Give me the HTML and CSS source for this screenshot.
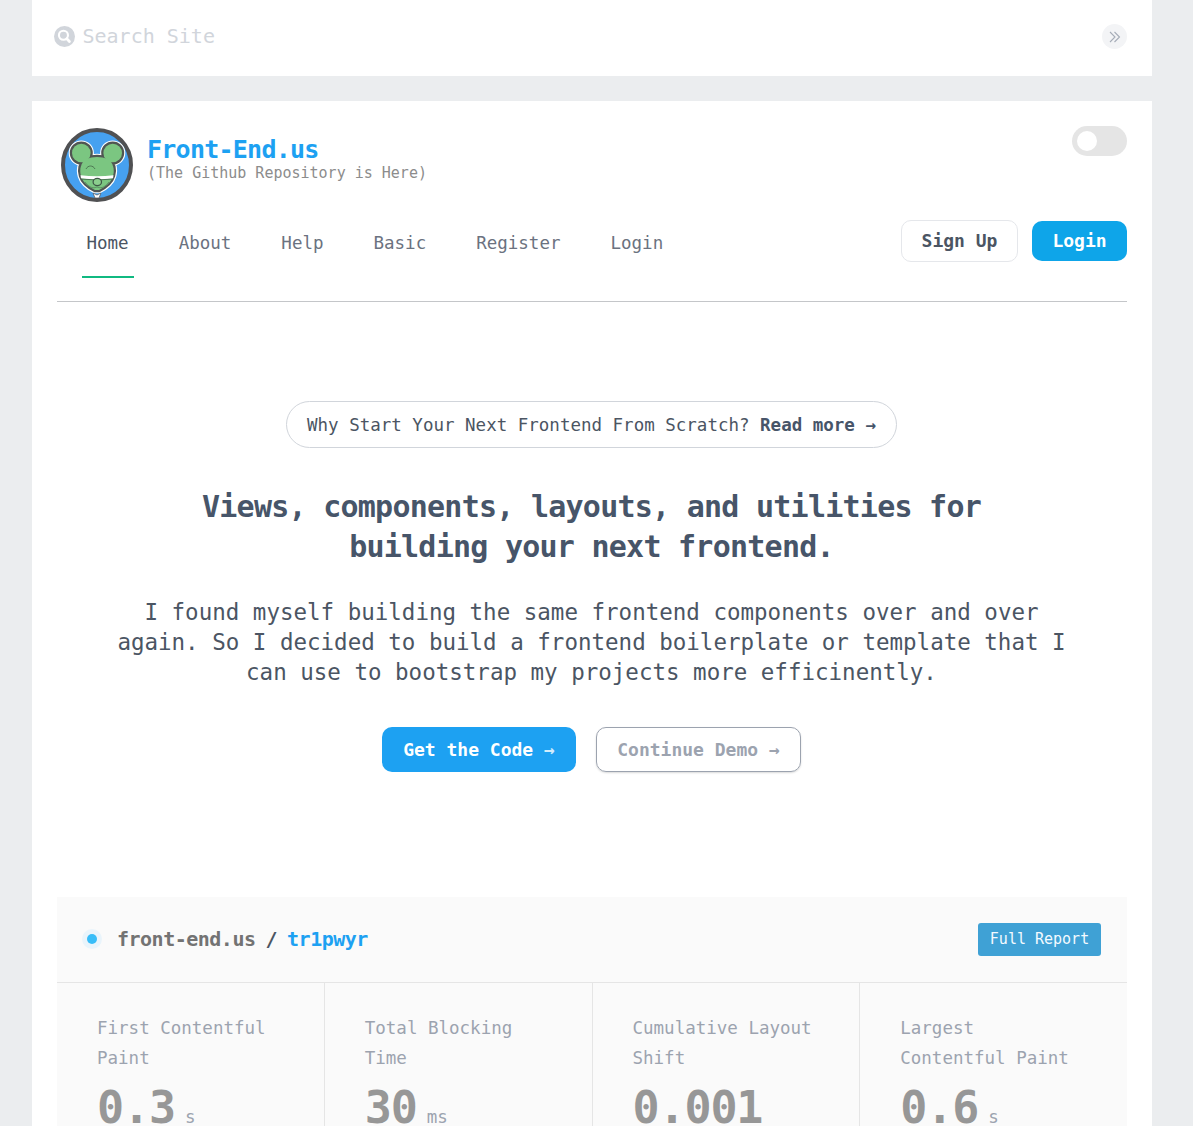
FILE: index.html
```html
<!DOCTYPE html>
<html lang="en">
<head>
<meta charset="utf-8">
<title>Front-End.us</title>
<link rel="stylesheet" href="styles.css">
</head>
<body>
<div class="page">
  <div class="search">
    <svg class="search-icon" viewBox="0 0 20 20"><circle cx="10" cy="10" r="10" fill="#d1d5db"/><circle cx="9" cy="8.8" r="4.3" fill="#d1d5db" stroke="#fff" stroke-width="2"/><path d="M12.2 12.2l2.5 2.6" stroke="#fff" stroke-width="2.6" stroke-linecap="round"/></svg>
    <span class="search-text">Search Site</span>
    <button class="expand" aria-label="Expand"><svg viewBox="0 0 12 12" fill="none" stroke="#a6adb8" stroke-width="1.1"><path d="M1 1l5 5-5 5M5.5 1l5 5-5 5"/></svg></button>
  </div>
  <main class="main">
    <header class="header">
      <div class="brand-row">
        <svg class="logo" viewBox="0 0 72 74">
          <defs>
            <g id="head"><circle cx="20.300" cy="25" r="9.300"/><circle cx="51.700" cy="25" r="9.300"/><path d="M25 31q11-4 22 0c5 4 7 10 5 17-2 7-8 11-14 14h-4c-6-3-12-7-14-14-2-7 0-13 5-17z"/></g>
          </defs>
          <ellipse cx="36" cy="37" rx="34" ry="35" fill="#46a1f0" stroke="#505153" stroke-width="4"/>
          <use href="#head" fill="#fff" stroke="#fff" stroke-width="6.600"/>
          <use href="#head" fill="#505653" stroke="#505653" stroke-width="4.400"/>
          <use href="#head" fill="#7bc681"/>
          <path d="M25 41c2-4 7-4 9 0" fill="none" stroke="#49714e" stroke-width=".9"/>
          <path d="M19.500 47.300q16.500 2 33 0l-.5 3.200q-16 2-32 0z" fill="#fff"/>
          <path d="M20 51q16 2 32 0" fill="none" stroke="#416d4a" stroke-width=".9"/>
          <path d="M24 54q6 8 12 5 6 3 12-5" fill="none" stroke="#57875d" stroke-width=".8"/>
          <ellipse cx="36.300" cy="54" rx="4.200" ry="3.600" fill="#8bce8d" stroke="#3e5747" stroke-width="1.200"/>
          <path d="M32 65l4 2 4-2-2 5h-4z" fill="#fff" stroke="#505153" stroke-width=".7"/>
        </svg>
        <div class="brand">
          <div class="brand-name">Front-End.us</div>
          <div class="brand-sub">(The Github Repository is Here)</div>
        </div>
        <span class="toggle"><span class="knob"></span></span>
      </div>
      <div class="nav-row">
        <nav class="nav">
          <a class="nav-link active">Home</a><a class="nav-link">About</a><a class="nav-link">Help</a><a class="nav-link">Basic</a><a class="nav-link">Register</a><a class="nav-link">Login</a>
        </nav>
        <a class="btn signup">Sign Up</a>
        <a class="btn login">Login</a>
      </div>
    </header>
    <section class="hero">
      <div class="pill">Why Start Your Next Frontend From Scratch? <b>Read more →</b></div>
      <h1 class="title">Views, components, layouts, and utilities for<br>building your next frontend.</h1>
      <p class="lead">I found myself building the same frontend components over and over<br>again. So I decided to build a frontend boilerplate or template that I<br>can use to bootstrap my projects more efficinently.</p>
      <div class="actions">
        <a class="btn code">Get the Code <span class="arrow">→</span></a>
        <a class="btn demo">Continue Demo →</a>
      </div>
    </section>
    <section class="report">
      <div class="report-head">
        <span class="dot"></span>
        <div class="crumbs"><span class="site">front-end.us</span><span class="slash">/</span><span class="user">tr1pwyr</span></div>
        <a class="full">Full Report</a>
      </div>
      <div class="stats">
        <div class="stat"><p class="label">First Contentful Paint</p><p class="value"><span class="num">0.3</span><span class="unit">s</span></p></div>
        <div class="stat"><p class="label">Total Blocking Time</p><p class="value"><span class="num">30</span><span class="unit">ms</span></p></div>
        <div class="stat"><p class="label">Cumulative Layout Shift</p><p class="value"><span class="num">0.001</span></p></div>
        <div class="stat"><p class="label">Largest Contentful Paint</p><p class="value"><span class="num">0.6</span><span class="unit">s</span></p></div>
      </div>
    </section>
  </main>
</div>
</body>
</html>
```
FILE: styles.css
```css
* { box-sizing: border-box; }
html { background: #fff; }
body, h1, p { margin: 0; }
body { font: 17.5px/25px "DejaVu Sans Mono", monospace; color: #4b5563; }
.page { height: 1126px; overflow: hidden; background: #ebedef; padding: 0 41px 0 32px; }
.search { height: 76px; margin-bottom: 25px; background: #fff; display: flex; align-items: flex-start; padding: 24px 25px 0 22px; }
.search-icon { width: 21px; height: 21px; margin-top: 2px; }
.search-text { margin-left: 7.5px; font-size: 20px; color: #d1d5db; flex: 1; }
.expand { width: 25px; height: 25px; padding: 0; border: 0; border-radius: 50%; background: #f3f4f6; display: grid; place-items: center; }
.expand svg { width: 12px; height: 12px; }
.main { background: #fff; height: 1025px; padding: 25px 25px 0; }
.header { height: 176px; border-bottom: 1px solid #c4c6c9; }
.brand-row { display: flex; align-items: flex-start; height: 94px; padding-left: 4px; }
.logo { width: 72px; height: 74px; margin-top: 2px; }
.brand { flex: 1; padding: 11px 0 0 14px; }
.brand-name { font-size: 25px; font-weight: 700; letter-spacing: -.75px; color: #1da1f2; line-height: 25px; }
.brand-sub { font-size: 15px; line-height: 22px; color: #8c8c8c; }
.toggle { width: 55px; height: 30px; border-radius: 15px; background: #e5e5e5; padding: 5px; }
.knob { display: block; width: 20px; height: 20px; border-radius: 50%; background: #fff; }
.nav-row { display: flex; align-items: flex-start; }
.nav { flex: 1; display: flex; gap: 40px; padding: 11px 0 0 25px; }
.nav-link { height: 47px; padding: 0 5px; color: #6b7280; border-bottom: 2px solid transparent; }
.nav-link.active { color: #4b5563; border-color: #10b981; padding: 0 5px 0 4.5px; }
.btn { font-size: 18px; font-weight: 700; display: flex; align-items: center; justify-content: center; border-radius: 10px; }
.signup { width: 117px; height: 42px; border: 1px solid #e5e7eb; padding-bottom: 2px; }
.login { width: 95px; height: 40px; margin: 1px 0 0 14px; padding-bottom: 2px; background: #0ea5e9; color: #fff; }
.hero { height: 595px; padding: 99px 1px 0 0; text-align: center; display: flex; flex-direction: column; align-items: center; }
.pill { height: 47px; width: 611px; border: 1px solid #d1d5db; border-radius: 24px; line-height: 47px; white-space: nowrap; }
.pill b, .title { color: #475569; }
.title { margin-top: 39px; font-size: 30px; line-height: 40px; letter-spacing: -.75px; }
.lead { margin-top: 30px; font-size: 22.5px; line-height: 30px; white-space: nowrap; }
.actions { display: flex; gap: 20px; margin-top: 40px; white-space: pre; }
.code { width: 194px; height: 45px; background: #1da1f2; color: #fff; }
.arrow { opacity: .8; }
.demo { width: 205px; height: 45px; border: 1px solid #9ca3af; color: #9ca3af; box-shadow: 0 1px 2px rgba(0, 0, 0, .15); }
.report { background: #fafafa; height: 229px; }
.report-head { height: 86px; border-bottom: 1px solid #e5e5e5; display: flex; align-items: center; padding: 0 26px 0 30px; }
.dot { width: 10px; height: 10px; margin-bottom: 1px; border-radius: 50%; background: #38bdf8; box-shadow: 0 0 0 5px #e9f4fb; }
.crumbs { flex: 1; display: flex; gap: 10px; margin-left: 20px; font-size: 20px; font-weight: 700; letter-spacing: -.5px; }
.site { color: #737373; }
.slash { color: #4b5563; }
.user { color: #1da1f2; }
.full { width: 123px; height: 33px; border-radius: 3px; background: #3fa1d5; color: #f3faff; font-size: 15px; line-height: 32px; text-align: center; }
.stats { display: grid; grid-template-columns: repeat(4, 1fr); gap: 1px; background: #e5e5e5; }
.stat { height: 143px; background: #fafafa; padding: 30px 40px 0; }
.label { color: #9ca3af; line-height: 30px; }
.value { display: flex; align-items: baseline; gap: 10px; margin-top: 10px; line-height: 50px; white-space: nowrap; color: #979797; }
.num { font-size: 45px; font-weight: 700; letter-spacing: -1.125px; }
.unit { color: #9ca3af; }
```
